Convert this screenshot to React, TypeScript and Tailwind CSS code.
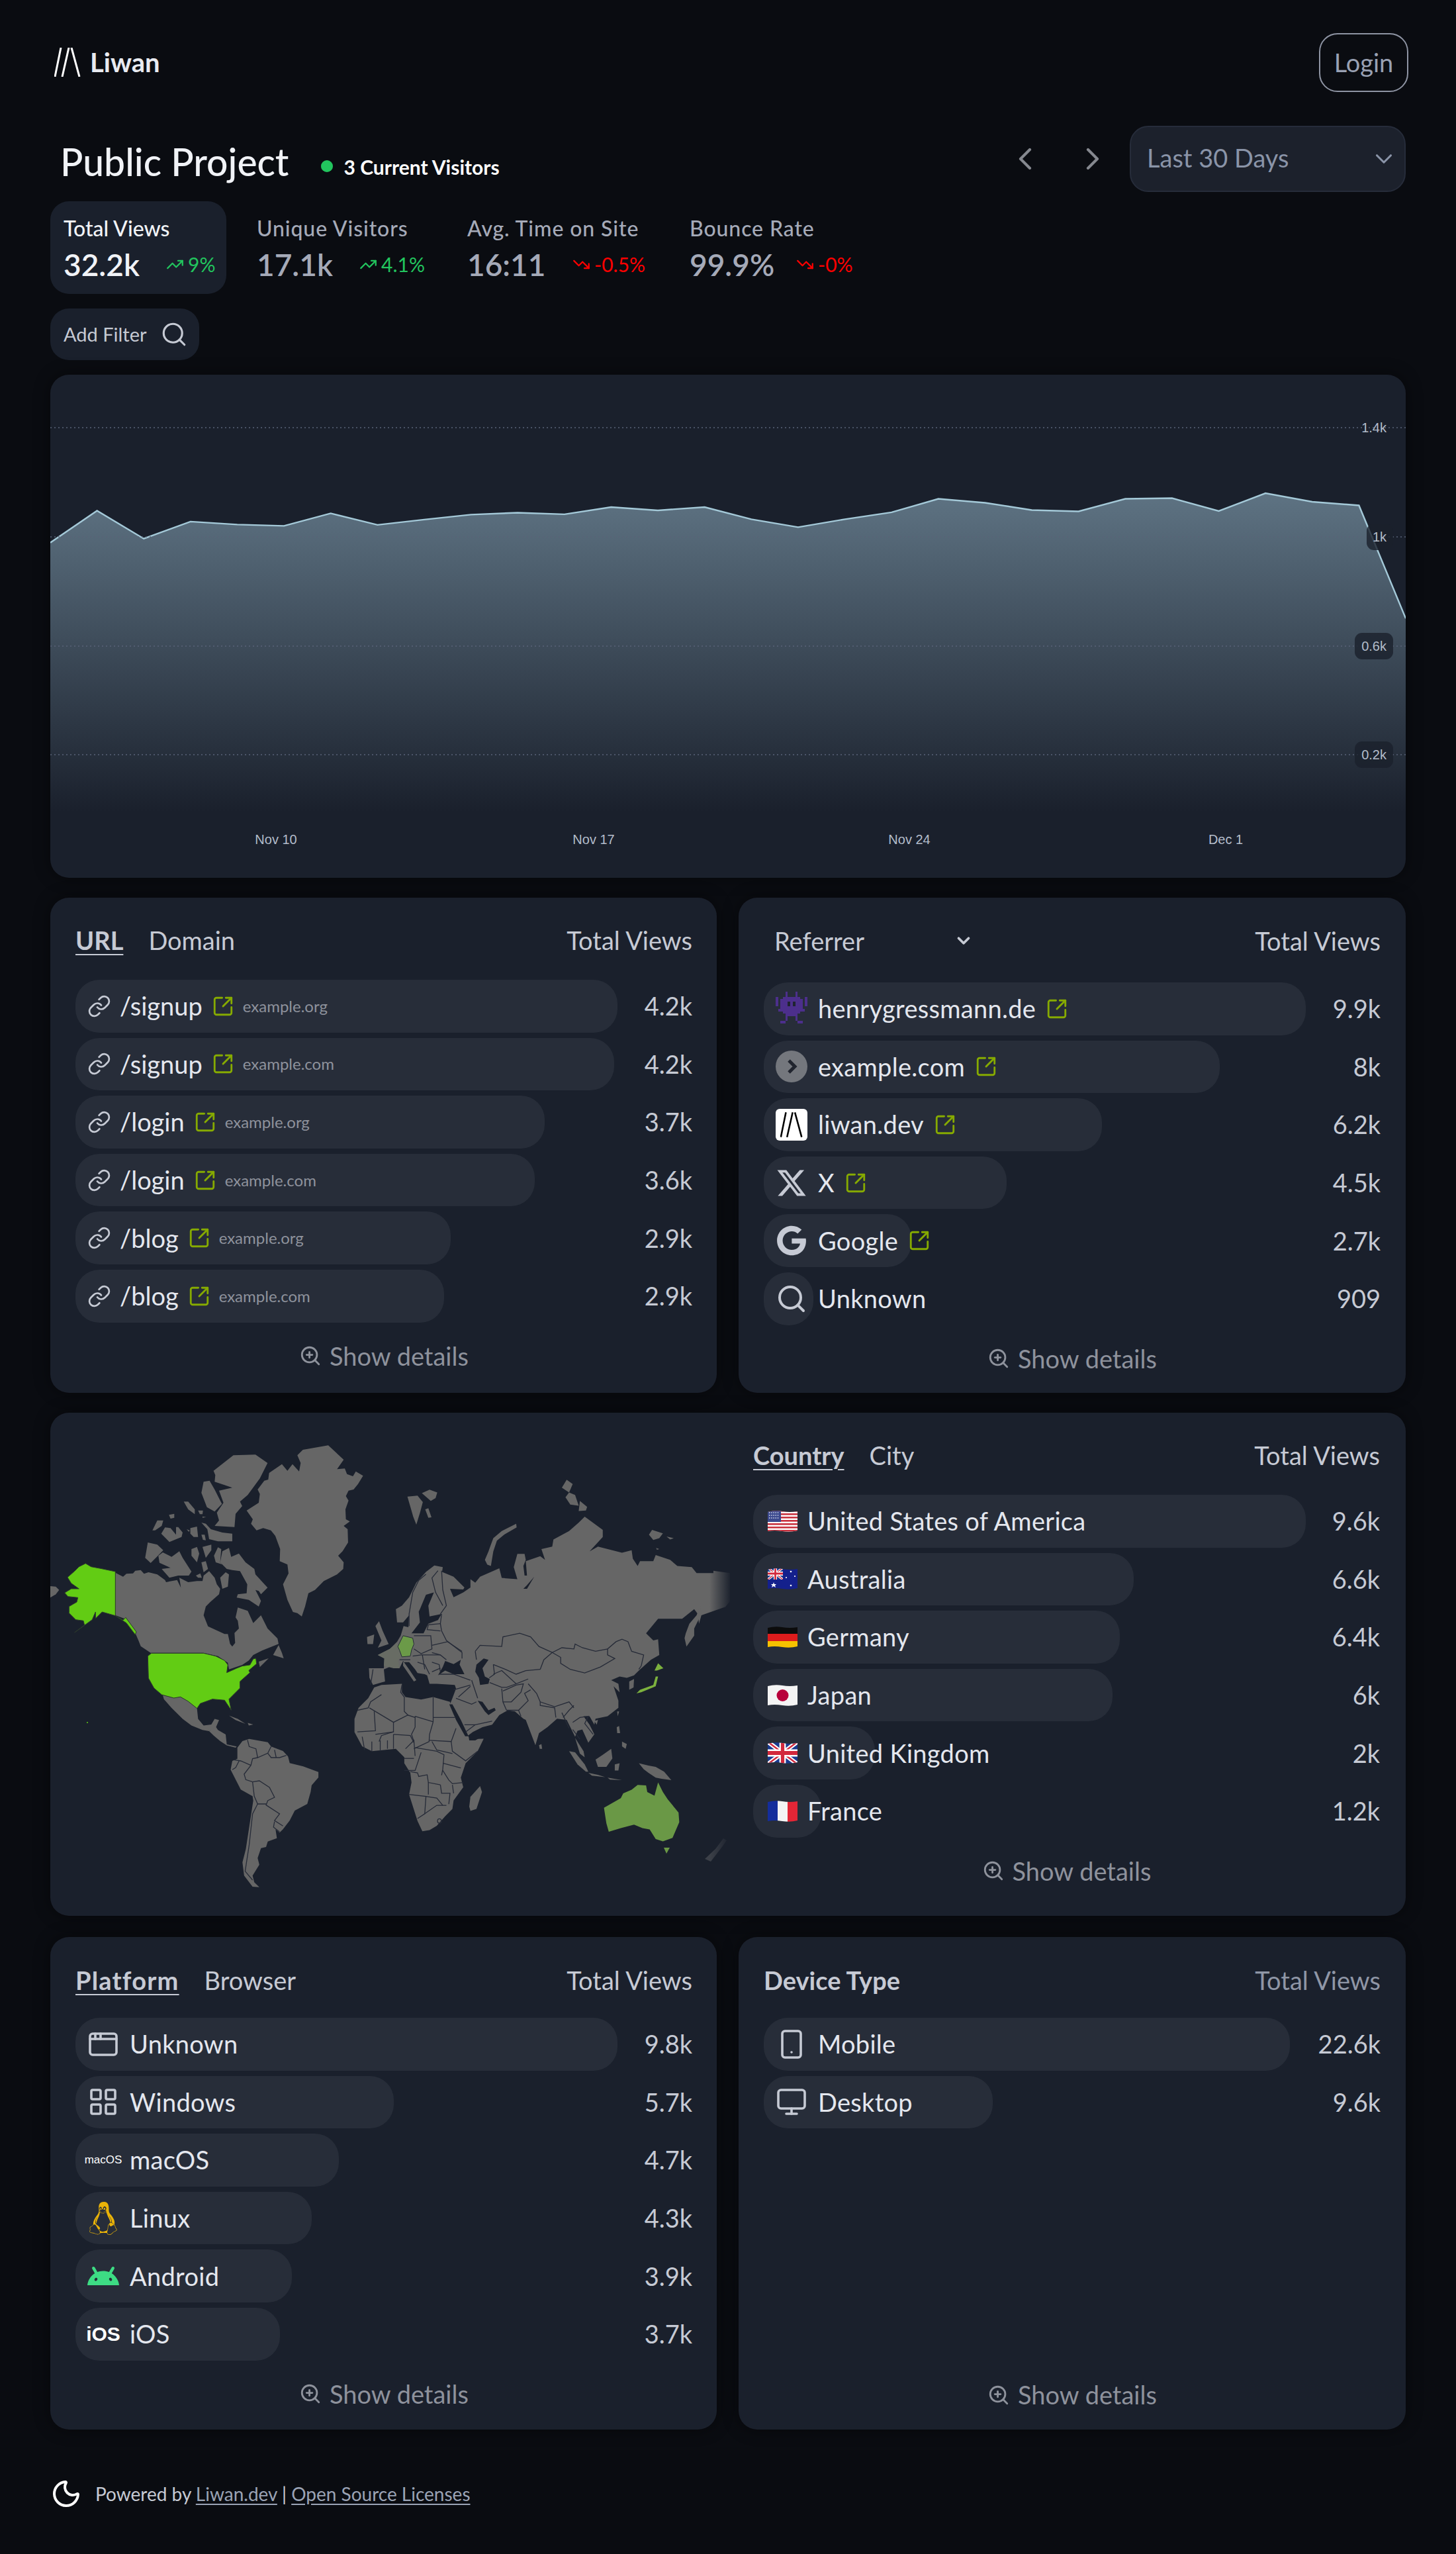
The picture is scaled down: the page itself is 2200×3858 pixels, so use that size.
import type { ReactNode } from 'react';
import {
  AppWindow,
  ChevronDown,
  ChevronLeft,
  ChevronRight,
  LayoutGrid,
  Link,
  Monitor,
  Moon,
  Search,
  Smartphone,
  SquareArrowOutUpRight,
  TrendingDown,
  TrendingUp,
  ZoomIn,
} from 'lucide-react';
import { FaGoogle, FaLinux, FaXTwitter } from 'react-icons/fa6';
import { SiAndroid } from 'react-icons/si';

type RowData = {
  label: string;
  value: string;
  right: number;
  icon: ReactNode;
  ext?: boolean;
  sub?: string;
};

function LiwanLogo({ className, color }: { className: string; color: string }) {
  return (
    <svg viewBox="0 0 40 44" className={className} fill="none" stroke={color} strokeWidth="3">
      <path d="M1 44 10 0M12 44 22 0M26 0 38 44" />
    </svg>
  );
}

function Invader() {
  return (
    <svg viewBox="0 0 13 14" className="h-[56px] w-[48px]" fill="#4c2f8c" shapeRendering="crispEdges">
      <path d="M0 2h1v4H0zM12 2h1v4h-1zM4 0h1v2H4zM8 0h1v2H8z" />
      <path d="M3 2h7v1h1v5h-1v1H9v3H8v-2H5v2H4V9H3V8H2V3h1z" />
      <path d="M2 12h2v1H2zM9 12h2v1H9zM1 7h1v1H1zM11 7h1v1h-1z" />
      <path d="M5 4h1v2H5zM7 4h1v2H7z" fill="#1f2430" />
    </svg>
  );
}

function ExampleIcon() {
  return (
    <svg viewBox="0 0 48 48" className="size-[48px]">
      <circle cx="24" cy="24" r="24" fill="#74777d" />
      <path d="M20 15l9 9-9 9" fill="none" stroke="#20242e" strokeWidth="5" />
    </svg>
  );
}

function FlagShape({ id, children }: { id: string; children: ReactNode }) {
  return (
    <svg viewBox="0 0 45 34" className="h-[34px] w-[45px]">
      <clipPath id={id}>
        <path d="M0 3Q11 0 22 2T45 2V31Q34 34 22 32T0 32Z" />
      </clipPath>
      <g clipPath={`url(#${id})`}>{children}</g>
    </svg>
  );
}

function UnionJack({ w, h }: { w: number; h: number }) {
  return (
    <svg x="0" y="0" width={w} height={h} viewBox="0 0 60 40" preserveAspectRatio="none">
      <rect width="60" height="40" fill="#1a3a8f" />
      <path d="M0 0 60 40M60 0 0 40" stroke="#fff" strokeWidth="8" />
      <path d="M0 0 60 40M60 0 0 40" stroke="#d2283c" strokeWidth="3" />
      <path d="M30 0V40M0 20H60" stroke="#fff" strokeWidth="13" />
      <path d="M30 0V40M0 20H60" stroke="#d2283c" strokeWidth="7" />
    </svg>
  );
}

function FlagUS() {
  const stripes = [0, 1, 2, 3, 4, 5, 6];
  return (
    <FlagShape id="flag-us">
      <rect width="45" height="34" fill="#fff" />
      {stripes.map((i) => (
        <rect key={i} y={i * 5} width="45" height="2.6" fill="#c8313e" />
      ))}
      <rect width="20" height="18" fill="#3c4a8e" />
      <path d="M2 4h16M2 8h16M2 12h16" stroke="#dfe3f2" strokeWidth="1.4" strokeDasharray="1.4 1.8" />
    </FlagShape>
  );
}

function FlagAU() {
  return (
    <FlagShape id="flag-au">
      <rect width="45" height="34" fill="#14208c" />
      <UnionJack w={23} h={18} />
      <path d="M9 22l1 3h3l-2 2 1 3-3-2-3 2 1-3-2-2h3z" fill="#fff" />
      <circle cx="35" cy="6" r="1.3" fill="#fff" />
      <circle cx="35" cy="27" r="1.3" fill="#fff" />
      <circle cx="28" cy="15" r="1.1" fill="#fff" />
      <circle cx="41" cy="13" r="1.1" fill="#fff" />
    </FlagShape>
  );
}

function FlagDE() {
  return (
    <FlagShape id="flag-de">
      <rect width="45" height="12" fill="#0c0c0c" />
      <rect y="12" width="45" height="11" fill="#dd1c1c" />
      <rect y="23" width="45" height="11" fill="#f6c200" />
    </FlagShape>
  );
}

function FlagJP() {
  return (
    <FlagShape id="flag-jp">
      <rect width="45" height="34" fill="#f4f4f4" />
      <circle cx="22.5" cy="17" r="9" fill="#b8003a" />
    </FlagShape>
  );
}

function FlagGB() {
  return (
    <FlagShape id="flag-gb">
      <UnionJack w={45} h={34} />
    </FlagShape>
  );
}

function FlagFR() {
  return (
    <FlagShape id="flag-fr">
      <rect width="15" height="34" fill="#142d9c" />
      <rect x="15" width="15" height="34" fill="#f4f4f4" />
      <rect x="30" width="15" height="34" fill="#e32636" />
    </FlagShape>
  );
}

// americas and greenland, traced at 3x
const WEST_LAND = [
  'M1120 85 1145 60 1260 40 1330 105 1300 148 1335 145 1345 170 1372 180 1385 158 1418 178 1395 215 1375 240 1352 245 1340 270 1352 290 1338 330 1340 375 1358 385 1330 405 1348 420 1350 480 1325 520 1305 540 1330 570 1328 600 1300 625 1240 655 1200 695 1170 710 1155 770 1140 815 1120 800 1100 795 1075 740 1055 670 1080 620 1075 580 1040 565 1042 510 1020 450 1000 425 965 415 935 425 910 395 918 375 890 335 945 300 950 260 940 240 970 200 988 195 992 165 1050 125 1075 155 1098 125 1128 158 1135 120Z',
  'M740 155 830 85 930 82 985 120 950 190 895 265 860 295 870 315 840 350 835 410 745 405 765 380 755 345 785 300 765 245 825 232 790 220 745 205 748 175Z',
  'M695 205 722 200 745 240 765 280 778 305 745 340 710 320 685 255Z',
  'M605 295 625 295 655 330 655 352 625 330Z',
  'M670 335 692 335 690 352 678 352Z',
  'M690 362 706 365 690 368Z',
  'M538 355 562 350 562 368 545 372Z',
  'M463 425 485 380 512 380 505 405 475 425Z',
  'M685 390 705 395 728 420 780 435 825 440 825 475 760 475 720 465 712 420Z',
  'M570 410 580 410 600 435 595 455 540 478 503 440 520 412 545 415 570 445Z',
  'M618 420 632 425 628 432Z',
  'M635 415 665 408 670 455 650 455 635 440Z',
  'M685 445 700 445 705 470 692 468Z',
  'M430 550 442 480 485 490 512 515 480 548 455 573Z',
  'M490 540 510 525 550 545 585 520 600 550 640 612 628 630 580 630 540 640 505 600 545 595 495 572Z',
  'M640 510 665 500 675 530 665 570 640 540Z',
  'M690 500 730 490 730 515 705 550Z',
  'M742 540 760 502 775 510 770 570 780 580 750 570Z',
  'M780 520 810 505 820 545 855 530 885 570 925 600 930 625 985 685 955 715 945 700 930 695 955 745 945 770 900 740 845 730 850 715 890 710 893 670 860 610 825 605 800 600 770 570Z',
  'M770 640 795 615 810 625 805 680 780 690Z',
  'M660 630 680 620 687 640 670 640Z',
  'M685 570 705 565 715 600 695 615Z',
  'M295 617 330 635 345 622 375 620 385 608 410 605 425 622 445 615 485 625 520 650 525 660 575 650 592 685 585 640 625 660 665 655 690 655 695 630 720 610 745 640 755 670 770 690 765 715 725 750 705 770 695 810 715 860 790 895 805 895 815 940 825 952 838 935 835 890 855 870 850 835 840 820 850 775 895 790 920 845 955 810 985 870 1030 915 1035 940 960 970 920 990 900 1015 870 1035 810 1055 805 1025 760 995 695 980 455 980 410 950 400 925 385 890 350 830 295 810Z',
  'M1010 990 1035 945 1050 980 1058 1005Z',
  'M945 1020 990 1005 950 1045Z',
  'M0 678 25 680 40 695 25 715 0 730Z',
  'M510 1172 560 1185 590 1180 625 1200 665 1232 670 1280 695 1310 730 1305 745 1280 765 1285 750 1320 720 1335 690 1330 640 1310 600 1280 550 1230 515 1190Z',
  'M720 1335 750 1315 760 1330 795 1350 800 1395 845 1405 840 1410 800 1400 770 1380 740 1355Z',
  'M810 1265 850 1280 885 1302 840 1285Z',
  'M895 1298 920 1305 900 1310Z',
];

const US_STATES = [
  'M442 995 458 982 695 982 750 995 790 1015 805 1035 800 1070 845 1050 870 1040 905 1035 920 1008 932 1005 935 1030 900 1060 905 1070 860 1110 860 1140 810 1190 820 1240 810 1225 790 1195 735 1190 680 1210 665 1232 625 1200 590 1180 560 1185 505 1170 470 1140 445 1095Z',
  'M295 612 228 598 185 590 160 575 130 590 110 610 78 638 95 665 130 690 95 690 65 708 80 725 125 730 120 750 85 770 85 800 115 830 150 835 155 855 110 888 190 830 205 795 205 825 235 795 295 812 330 832 342 820 390 885 385 898 345 845 295 812Z',
];

// south america, traced from the wide crop
const SOUTH_LAND =
  'M115 240 130 210 150 200 205 215 215 235 250 255 265 280 270 310 310 325 355 350 355 375 335 410 332 440 322 495 285 525 270 570 250 610 240 625 228 610 232 650 205 665 200 690 185 695 175 740 180 770 160 820 165 850 180 872 160 870 135 820 130 760 140 700 150 600 162 480 160 460 125 430 95 340 100 300 115 290Z';

const SOUTH_BORDERS = [
  'M145 205 150 235 170 245 175 285 205 265 215 235',
  'M205 265 215 285 240 285 260 275',
  'M225 250 230 285',
  'M175 285 160 290 155 320 135 360 140 385 160 395',
  'M105 295 125 300 155 320',
  'M120 300 110 330 100 340',
  'M160 395 180 390 210 420 225 465 205 480 200 500 240 540 225 570 250 595',
  'M160 395 165 460 175 495 200 495',
  'M175 495 160 540 150 680 138 800 160 840',
  'M225 575 222 600 240 622',
];

// old world and australia, traced at 2.75x
const EAST_LAND = [
  'M160 580 185 565 215 530 245 470 285 425 320 398 355 405 352 425 400 445 445 490 440 498 385 495 400 530 440 510 470 490 470 455 490 470 510 445 590 410 600 450 665 455 650 405 665 350 695 350 700 375 690 400 695 440 725 440 735 445 705 480 690 495 705 495 735 445 705 440 700 380 760 360 780 375 765 330 810 320 815 290 880 255 920 220 945 195 1020 250 1020 280 965 340 1000 320 1100 345 1140 335 1145 370 1165 400 1175 380 1230 380 1240 355 1300 375 1330 400 1390 405 1410 430 1480 430 1480 420 1550 430 1550 545 1530 570 1430 605 1420 640 1415 600 1400 580 1350 620 1250 620 1200 680 1230 710 1250 705 1255 770 1220 790 1170 835 1150 855 1120 865 1090 860 1055 875 1085 890 1090 925 1065 900 1085 960 1085 990 1040 1025 990 1035 985 1060 965 1025 940 1025 965 1060 985 1100 960 1135 935 1080 915 1085 905 1110 870 1040 830 1035 790 1070 755 1095 740 1145 700 1040 690 1035 655 1005 625 1000 590 1020 560 1060 520 1070 480 1090 460 1105 445 1100 420 1040 385 975 395 950 410 910 405 895 330 890 300 890 290 855 280 850 250 845 240 830 215 800 190 800 190 815 235 880 245 875 215 830 190 795 175 825 145 815 110 830 115 880 65 895 50 865 48 825 110 825 112 785 85 770 135 745 165 715 180 690 192 650 212 655 215 605 190 635 165 635Z',
  'M-12 1036 5 990 45 950 70 905 100 895 185 890 185 925 200 945 265 955 315 945 385 965 400 1015 455 1100 470 1120 525 1118 500 1170 450 1220 430 1280 440 1320 400 1375 395 1410 365 1440 330 1480 300 1498 270 1503 250 1460 215 1350 225 1300 220 1260 195 1220 195 1195 160 1160 60 1170 20 1150 -12 1091Z',
  'M465 1400 470 1360 510 1315 518 1340 495 1410 470 1418Z',
  'M208 112 250 108 272 135 260 180 245 228 232 195Z',
  'M268 98 300 83 332 95 325 118 305 130Z',
  'M282 165 295 160 308 198 295 200Z',
  'M850 75 870 42 895 60 880 95Z',
  'M865 115 880 95 905 105 920 150 885 145Z',
  'M925 130 955 155 950 170 920 172Z',
  'M530 375 545 340 552 320 565 285 600 255 660 225 662 240 610 270 580 295 565 340 555 400 540 395Z',
  'M1212 270 1225 250 1270 265 1255 285 1230 292Z',
  'M1285 278 1315 285 1300 290Z',
  'M1242 325 1255 330 1245 333Z',
  'M1365 680 1380 640 1410 605 1425 565 1428 590 1420 620 1400 660 1400 690 1368 735 1360 700Z',
  'M75 650 90 630 105 670 130 725 85 740 100 710Z',
  'M40 695 70 685 65 725 42 725Z',
  'M1130 880 1150 870 1148 905 1130 915Z',
  'M755 1145 765 1140 768 1160 758 1160Z',
  'M985 1045 1000 1040 995 1060Z',
  'M1080 1005 1088 1005 1082 1025Z',
  'M1078 1070 1088 1065 1092 1095 1080 1095Z',
  'M1100 1130 1120 1140 1115 1160 1100 1150Z',
  'M880 1170 905 1175 945 1225 960 1255 950 1255 915 1225Z',
  'M960 1260 1000 1268 1030 1278 975 1272Z',
  'M990 1205 1020 1185 1055 1160 1060 1200 1035 1235 1000 1235Z',
  'M1070 1225 1090 1220 1085 1250 1070 1250Z',
  'M905 1115 940 1170 945 1195 925 1180Z',
  'M1170 1220 1210 1230 1240 1235 1275 1255 1305 1290 1265 1285 1240 1280 1210 1260 1190 1245Z',
  'M1040 1280 1100 1290 1050 1288Z',
];

const EAST_SEAS = [
  'M260 580 285 520 318 510 295 565 300 610 350 600 335 625 295 640 275 680 225 680 260 635 255 590Z',
  'M335 855 355 820 365 795 400 808 430 790 425 810 445 850 400 850 365 835Z',
  'M495 810 525 785 545 790 520 825 530 860 550 870 545 890 510 895 505 865 490 840Z',
  'M382 975 395 975 430 1040 462 1108 448 1108 410 1040Z',
  'M500 960 520 965 545 1000 570 990 575 1000 545 1020 530 1005Z',
  'M462 1105 525 1105 490 1125 465 1125Z',
];

const EAST_BORDERS = [
  'M100 935 55 965 45 990 0 1000',
  'M50 990 150 1050 210 1020 240 1030',
  'M185 895 180 925 195 945 195 1005 210 1020',
  'M315 945 315 1048',
  'M240 1025 315 1048',
  'M315 1030 405 1030',
  'M70 1005 75 1085 0 1090',
  'M150 1050 150 1090 75 1100',
  'M240 1025 240 1070 225 1100 235 1130',
  'M150 1090 130 1095 100 1105 90 1130',
  'M315 1048 300 1100 298 1130 235 1160',
  'M410 1075 390 1130 300 1125',
  'M390 1130 395 1170 450 1210 500 1170',
  'M310 1130 330 1165 395 1180',
  'M20 1110 30 1165',
  'M60 1130 60 1170',
  'M95 1125 95 1170',
  'M125 1125 125 1160',
  'M150 1100 150 1160',
  'M150 1100 220 1105 235 1135',
  'M200 1160 235 1125 240 1190',
  'M240 1155 330 1170 360 1185 355 1245 350 1270',
  'M265 1175 240 1250 195 1250',
  'M195 1200 235 1200',
  'M220 1255 250 1260 255 1275 290 1268 295 1300 345 1310',
  'M295 1300 295 1350',
  'M355 1220 430 1240',
  'M355 1250 380 1290 395 1305 440 1300',
  'M215 1350 285 1358 280 1430 250 1450',
  'M285 1358 330 1365 355 1395',
  'M280 1430 330 1395 370 1395',
  'M345 1310 350 1345 385 1345 380 1390',
  'M395 1310 400 1345',
  'M333 1460a8 9 0 1 0 16 0a8 9 0 1 0 -16 0',
  'M350 600 345 640 350 670 370 710 435 760 435 785',
  'M490 755 510 730 600 735 605 695 675 680 720 695 755 735 810 760 775 790 760 830',
  'M490 755 495 790',
  'M810 760 850 740 900 745 905 725 935 740 990 755 1040 745 1075 715 1100 705 1125 715 1140 755 1190 770 1180 815 1170 830',
  'M810 760 845 780 845 805 885 830 945 845 1010 820 1070 785 1040 770 1040 745',
  'M565 810 615 830 660 850 700 835 760 830',
  'M565 810 570 850 548 865',
  'M565 850 600 835 660 890',
  'M550 885 600 905 620 905 660 890 710 870',
  'M475 875 500 950',
  'M600 910 605 965 620 1000',
  'M605 920 660 895 690 890 680 925 640 965 605 965',
  'M620 1000 670 1000 710 960 695 930 720 915',
  'M710 890 745 930 760 965 820 985 880 965 900 990',
  'M670 1000 680 1025',
  'M760 965 760 980 820 990 825 1030',
  'M850 1010 880 1075',
  'M900 980 880 1000 855 1030',
  'M895 1050 925 1030 960 1025 945 1055 980 1100',
  'M895 1080 925 1120',
  'M410 950 475 975 495 965',
  'M420 945 470 900',
  'M445 1060 490 1060 560 1045',
  'M490 1060 450 1090',
  'M340 850 400 850 470 875',
  'M400 915 470 895',
  'M285 435 255 460 230 510 215 600 215 650',
  'M335 420 310 450 325 510 355 565',
  'M350 420 355 500 370 565 345 600',
  'M235 690 305 690 310 745 265 765 235 745',
  'M345 640 295 645 290 665 345 670',
  'M310 730 375 715 435 755',
  'M310 760 345 770 370 790',
  'M230 775 265 770 300 770 345 770',
  'M250 800 280 810 300 850',
  'M270 770 280 830',
  'M310 800 340 810 345 840',
  'M310 840 345 825',
  'M65 830 55 895',
  'M175 790 220 790',
];

function MapPaths({ paths, className }: { paths: string[]; className?: string }) {
  return (
    <g className={className}>
      {paths.map((d) => (
        <path key={d} d={d} vectorEffect="non-scaling-stroke" />
      ))}
    </g>
  );
}

function WorldMap() {
  const border = { fill: 'none', stroke: '#262b38', strokeWidth: 1.3 };
  return (
    <svg viewBox="0 0 1027 760" className="h-[760px] w-[1027px] shrink-0">
      <defs>
        <linearGradient id="map-fade" x1="0" x2="1" y1="0" y2="0">
          <stop offset="0" stopColor="#1a202c" stopOpacity="0" />
          <stop offset="1" stopColor="#1a202c" stopOpacity="0.95" />
        </linearGradient>
      </defs>

      <g transform="translate(0 36) scale(0.3333)" fill="#666666">
        <MapPaths paths={WEST_LAND} />
        <g fill="#62cc14" stroke="#2c3a2c" strokeWidth="1">
          <MapPaths paths={US_STATES} />
        </g>
        <circle cx="168" cy="1296" r="3" fill="#62cc14" />
      </g>

      <g transform="translate(224 426) scale(0.5102 0.3333)" fill="#666666">
        <path d={SOUTH_LAND} />
        <g {...border}>
          <MapPaths paths={SOUTH_BORDERS} />
        </g>
      </g>

      <g transform="translate(464 86) scale(0.3635)" fill="#666666">
        <MapPaths paths={EAST_LAND} />
        <g fill="#1a202c">
          <MapPaths paths={EAST_SEAS} />
        </g>
        <path d="M85 770 135 745 165 720 185 778 170 790 175 825 150 825 110 815 112 785Z" fill="#686c64" />
        <g {...border}>
          <MapPaths paths={EAST_BORDERS} />
        </g>
        <path d="M168 735 190 690 230 700 235 725 225 750 220 775 185 778 175 750Z" fill="#6b9a48" stroke="#262b38" vectorEffect="non-scaling-stroke" />
        <path d="M1160 930 1175 915 1230 895 1240 860 1250 860 1240 900 1205 915 1180 925ZM1235 835 1250 805 1272 825 1245 835Z" fill="#7cb13e" />
        <path
          d="M1025 1405 1095 1365 1105 1345 1140 1330 1165 1310 1200 1312 1205 1340 1235 1355 1250 1300 1270 1340 1290 1370 1335 1425 1338 1465 1310 1530 1270 1545 1240 1535 1215 1495 1185 1490 1150 1475 1095 1490 1045 1505 1035 1470Z"
          fill="#6a9846"
        />
      </g>
      <path d="M927 657 936 657 931 666Z" fill="#6a9846" />
      <path d="M989 674 1005 659 1017 643 1022 646 1015 656 998 678Z" fill="#3c4048" />
      <rect x="996" y="0" width="31" height="760" fill="url(#map-fade)" />
    </svg>
  );
}

const CHART_POINTS = [
  522, 425, 510, 458, 467, 471, 433, 468, 452, 437, 431, 436, 414, 424, 414, 451, 475, 451, 430, 389, 401, 423, 427,
  389, 387, 426, 372, 398, 409, 752,
];

function Chart() {
  const pts = CHART_POINTS.map((z, i) => `${(i * 2048) / 29} ${z / 2.01 - 6}`);
  const grid = [
    { y: 80, label: '1.4k', pill: false },
    { y: 245, label: '1k', pill: true },
    { y: 410, label: '0.6k', pill: true },
    { y: 574, label: '0.2k', pill: true },
  ];
  const ticks = [
    { x: 341, label: 'Nov 10' },
    { x: 821, label: 'Nov 17' },
    { x: 1298, label: 'Nov 24' },
    { x: 1776, label: 'Dec 1' },
  ];
  return (
    <svg viewBox="0 0 2048 760" className="block h-full w-full">
      <defs>
        <linearGradient id="area" x1="0" x2="0" y1="0" y2="1">
          <stop offset="0" stopColor="#5e7383" />
          <stop offset="1" stopColor="#1a202c" />
        </linearGradient>
      </defs>
      <path d={`M${pts.join(' ')} V660 H0Z`} fill="url(#area)" />
      <path d={`M${pts.join(' ')}`} fill="none" stroke="#a4c9d8" strokeWidth="2.4" />
      {grid.map((g) => (
        <g key={g.label}>
          <path d={`M0 ${g.y}H2048`} stroke="#5a6378" strokeWidth="1.4" strokeDasharray="2 4" />
          {g.pill && (
            <rect x={g.label === '1k' ? 1989 : 1971} y={g.y - 20} width={g.label === '1k' ? 40 : 58} height="40" rx="11" fill="#1a202c" fillOpacity="0.8" />
          )}
          <text x="2019" y={g.y + 7} textAnchor="end" fontSize="20" fill="#b4bdcb" fontFamily="Liberation Sans">
            {g.label}
          </text>
        </g>
      ))}
      {ticks.map((t) => (
        <text key={t.label} x={t.x} y="709" textAnchor="middle" fontSize="20" fill="#b4bdcb" fontFamily="Liberation Sans">
          {t.label}
        </text>
      ))}
    </svg>
  );
}

function Bars({ rows, barLeft, textLeft, textGap }: { rows: RowData[]; barLeft: number; textLeft: string; textGap: string }) {
  return (
    <div className="flex flex-col gap-[8px]">
      {rows.map((row) => (
        <div key={row.label + row.sub} className="flex h-[79.6px] items-center justify-between">
          <div className="relative flex h-full items-center">
            <div
              className="absolute inset-y-0 left-0 rounded-[36px] bg-[#272d39]"
              style={{ width: row.right - barLeft }}
            />
            <div className={`relative flex items-center ${textLeft}`}>
              <span className="flex w-[48px] shrink-0 items-center justify-center text-[#c6cad4]">{row.icon}</span>
              <span className={`${textGap} text-[38px] whitespace-nowrap text-[#e4e7ee] ${row.sub ? '' : 'tracking-[0.3px]'}`}>{row.label}</span>
              {row.ext && <SquareArrowOutUpRight className={`${row.sub ? 'ml-[14px]' : 'ml-[15px]'} size-[34px] text-[#86aa00]`} strokeWidth={2} />}
              {row.sub && <span className="ml-[13px] text-[24px] whitespace-nowrap text-[#8e929c]">{row.sub}</span>}
            </div>
          </div>
          <span className="text-[38px] text-[#c6cad4]">{row.value}</span>
        </div>
      ))}
    </div>
  );
}

function ShowDetails({ className }: { className: string }) {
  return (
    <div className={`flex items-center justify-center gap-[12px] text-[38px] text-[#8e929c] ${className}`}>
      <ZoomIn className="size-[34px]" strokeWidth={2} />
      Show details
    </div>
  );
}

function Tab({ children, active, className = '' }: { children: ReactNode; active?: boolean; className?: string }) {
  return active ? (
    <span className={`font-bold text-[#c6cad4] underline decoration-[2px] underline-offset-[6px] ${className}`}>{children}</span>
  ) : (
    <span className={`text-[#c6cad4] ${className}`}>{children}</span>
  );
}

function Card({ className, children }: { className: string; children: ReactNode }) {
  return <section className={`rounded-[28px] bg-[#1a202c] shadow-[0_0_24px_rgba(0,0,0,0.45)] ${className}`}>{children}</section>;
}

const linkIcon = <Link className="size-[36px]" strokeWidth={1.8} />;

const urlRows: RowData[] = [
  { label: '/signup', sub: 'example.org', value: '4.2k', right: 933, ext: true, icon: linkIcon },
  { label: '/signup', sub: 'example.com', value: '4.2k', right: 928, ext: true, icon: linkIcon },
  { label: '/login', sub: 'example.org', value: '3.7k', right: 823, ext: true, icon: linkIcon },
  { label: '/login', sub: 'example.com', value: '3.6k', right: 808, ext: true, icon: linkIcon },
  { label: '/blog', sub: 'example.org', value: '2.9k', right: 681, ext: true, icon: linkIcon },
  { label: '/blog', sub: 'example.com', value: '2.9k', right: 671, ext: true, icon: linkIcon },
];

const referrerRows: RowData[] = [
  { label: 'henrygressmann.de', value: '9.9k', right: 1973, ext: true, icon: <Invader /> },
  { label: 'example.com', value: '8k', right: 1843, ext: true, icon: <ExampleIcon /> },
  {
    label: 'liwan.dev',
    value: '6.2k',
    right: 1665,
    ext: true,
    icon: (
      <span className="flex size-[48px] items-center justify-center rounded-[6px] bg-white">
        <LiwanLogo className="h-[38px] w-[34px]" color="#000" />
      </span>
    ),
  },
  { label: 'X', value: '4.5k', right: 1521, ext: true, icon: <FaXTwitter className="size-[48px]" /> },
  { label: 'Google', value: '2.7k', right: 1377, ext: true, icon: <FaGoogle className="size-[46px]" /> },
  { label: 'Unknown', value: '909', right: 1229, icon: <Search className="size-[50px]" strokeWidth={2} /> },
];

const countryRows: RowData[] = [
  { label: 'United States of America', value: '9.6k', right: 1973, icon: <FlagUS /> },
  { label: 'Australia', value: '6.6k', right: 1713, icon: <FlagAU /> },
  { label: 'Germany', value: '6.4k', right: 1692, icon: <FlagDE /> },
  { label: 'Japan', value: '6k', right: 1681, icon: <FlagJP /> },
  { label: 'United Kingdom', value: '2k', right: 1322, icon: <FlagGB /> },
  { label: 'France', value: '1.2k', right: 1241, icon: <FlagFR /> },
];

const platformRows: RowData[] = [
  { label: 'Unknown', value: '9.8k', right: 933, icon: <AppWindow className="size-[54px]" strokeWidth={1.8} /> },
  { label: 'Windows', value: '5.7k', right: 595, icon: <LayoutGrid className="size-[54px]" strokeWidth={1.8} /> },
  { label: 'macOS', value: '4.7k', right: 512, icon: <span className="font-['Liberation_Sans'] text-[17px] text-white">macOS</span> },
  { label: 'Linux', value: '4.3k', right: 471, icon: <FaLinux className="size-[50px] text-[#eab308]" /> },
  { label: 'Android', value: '3.9k', right: 441, icon: <SiAndroid className="size-[52px] text-[#3ddc84]" /> },
  { label: 'iOS', value: '3.7k', right: 423, icon: <span className="font-['Liberation_Sans'] text-[30px] font-bold text-white">iOS</span> },
];

const deviceRows: RowData[] = [
  { label: 'Mobile', value: '22.6k', right: 1949, icon: <Smartphone className="size-[54px]" strokeWidth={1.8} /> },
  { label: 'Desktop', value: '9.6k', right: 1500, icon: <Monitor className="size-[54px]" strokeWidth={1.8} /> },
];

const metrics = [
  { label: 'Total Views', value: '32.2k', delta: '9%', up: true, width: 'w-[292px]', valueWidth: 'w-[155px]', active: true },
  { label: 'Unique Visitors', value: '17.1k', delta: '4.1%', up: true, width: 'w-[318px]', valueWidth: 'w-[155px]' },
  { label: 'Avg. Time on Site', value: '16:11', delta: '-0.5%', up: false, width: 'w-[336px]', valueWidth: 'w-[159px]' },
  { label: 'Bounce Rate', value: '99.9%', delta: '-0%', up: false, width: 'w-[300px]', valueWidth: 'w-[161px]' },
];

export default function App() {
  return (
    <div className="min-h-[3858px] bg-[#0a0c11] px-[76px] font-['Lato','Noto_Sans',sans-serif] text-[#c6cad4]">
      <header className="flex h-[139px] items-end justify-between">
        <div className="mb-[15px] flex items-center gap-[14px] pl-[6px]">
          <LiwanLogo className="h-[44px] w-[40px]" color="#fff" />
          <span className="text-[40px] font-bold text-[#e8eaf0]">Liwan</span>
        </div>
        <button className="-mr-[4px] h-[89px] w-[135px] rounded-[28px] border-2 border-[#8e94a3] text-[38px] text-[#99a1b3]">Login</button>
      </header>

      <div className="mt-[51px] flex h-[100px] items-center justify-between">
        <div className="mt-[10px] flex items-center pl-[15px]">
          <h1 className="text-[57px] font-medium text-[#f1f3f7]">Public Project</h1>
          <span className="mt-[12px] ml-[48px] size-[18px] rounded-full bg-[#22c55e]" />
          <span className="mt-[14px] ml-[17px] text-[30px] font-bold text-white">3 Current Visitors</span>
        </div>
        <div className="flex items-center">
          <ChevronLeft className="size-[56px] text-[#85888f]" strokeWidth={1.8} />
          <ChevronRight className="ml-[46px] size-[56px] text-[#85888f]" strokeWidth={1.8} />
          <div className="ml-[28px] flex h-[100px] w-[417px] items-center justify-between rounded-[28px] border-2 border-[#262c3a] bg-[#1c212c] pr-[10px] pb-[4px] pl-[24px] text-[38px] text-[#8a94a8]">
            Last 30 Days
            <ChevronDown className="mt-[4px] size-[42px]" strokeWidth={1.8} />
          </div>
        </div>
      </div>

      <div className="mt-[14px] flex h-[140px]">
        {metrics.map((m) => (
          <div key={m.label} className={m.width}>
            <div className={`flex h-[140px] flex-col rounded-[28px] pt-[17px] pl-[20px] ${m.active ? 'w-[266px] bg-[#1a202c] text-[#f1f3f7]' : 'w-fit pr-[20px] text-[#a5aab8]'}`}>
              <div className={`text-[32px] font-medium whitespace-nowrap ${m.active ? '' : 'tracking-[0.9px]'}`}>{m.label}</div>
              <div className="-mt-[4px] flex items-center">
                <span className={`${m.valueWidth} text-[46px] font-semibold`}>{m.value}</span>
                <span className={`flex items-center gap-[6px] text-[30px] ${m.up ? 'text-[#22c55e]' : 'text-[#ff0000]'}`}>
                  {m.up ? <TrendingUp className="size-[27px]" /> : <TrendingDown className="size-[27px]" />}
                  {m.delta}
                </span>
              </div>
            </div>
          </div>
        ))}
      </div>

      <div className="mt-[22px] flex h-[78px] w-[225px] items-center justify-between rounded-[28px] bg-[#1a202c] pr-[17px] pl-[20px] text-[29px] text-[#c6cad4]">
        Add Filter
        <Search className="size-[42px]" strokeWidth={1.8} />
      </div>

      <Card className="mt-[22px] h-[760px] overflow-hidden">
        <Chart />
      </Card>

      <div className="mt-[30px] grid grid-cols-[1007px_1008px] justify-between">
        <Card className="flex h-[748px] flex-col pr-[37px] pl-[38px]">
          <div className="flex h-[124px] items-center justify-between pt-[4px] text-[38px]">
            <div className="flex gap-[38px]">
              <Tab active>URL</Tab>
              <Tab>Domain</Tab>
            </div>
            <span>Total Views</span>
          </div>
          <Bars rows={urlRows} barLeft={114} textLeft="pl-[12px]" textGap="ml-[7px]" />
          <ShowDetails className="mt-[22px]" />
        </Card>
        <Card className="flex h-[748px] flex-col px-[38px]">
          <div className="flex h-[128px] items-center justify-between pt-[2px] text-[38px]">
            <div className="flex items-center pl-[16px]">
              <span className="w-[271px]">Referrer</span>
              <ChevronDown className="size-[30px]" strokeWidth={3} />
            </div>
            <span>Total Views</span>
          </div>
          <Bars rows={referrerRows} barLeft={1154} textLeft="pl-[18px]" textGap="ml-[16px]" />
          <ShowDetails className="mt-[22px]" />
        </Card>
      </div>

      <Card className="mt-[30px] flex h-[760px]">
        <WorldMap />
        <div className="flex min-w-0 flex-1 flex-col pr-[39px] pl-[35px]">
          <div className="flex h-[124px] items-center justify-between pt-[4px] text-[38px]">
            <div className="flex gap-[38px]">
              <Tab active>Country</Tab>
              <Tab>City</Tab>
            </div>
            <span>Total Views</span>
          </div>
          <Bars rows={countryRows} barLeft={1138} textLeft="pl-[20px]" textGap="ml-[14px]" />
          <ShowDetails className="mt-[22px]" />
        </div>
      </Card>

      <div className="mt-[32px] grid grid-cols-[1007px_1008px] justify-between">
        <Card className="flex h-[744px] flex-col pr-[37px] pl-[38px]">
          <div className="flex h-[122px] items-center justify-between pt-[8px] text-[38px]">
            <div className="flex gap-[38px]">
              <Tab active className="tracking-[1.2px]">Platform</Tab>
              <Tab>Browser</Tab>
            </div>
            <span>Total Views</span>
          </div>
          <Bars rows={platformRows} barLeft={114} textLeft="pl-[18px]" textGap="ml-[16px]" />
          <ShowDetails className="mt-[22px]" />
        </Card>
        <Card className="flex h-[744px] flex-col px-[38px]">
          <div className="flex h-[122px] items-center justify-between pt-[8px] text-[38px]">
            <span className="font-bold">Device Type</span>
            <span className="text-[#8f96a6]">Total Views</span>
          </div>
          <Bars rows={deviceRows} barLeft={1154} textLeft="pl-[18px]" textGap="ml-[16px]" />
          <ShowDetails className="mt-auto mb-[24px]" />
        </Card>
      </div>

      <footer className="mt-[73px] flex items-center gap-[20px] text-[28px] text-[#c6cad4]">
        <Moon className="size-[48px] text-white" strokeWidth={2} />
        <span>
          Powered by <span className="text-[#9aa3b5] underline underline-offset-4">Liwan.dev</span> |{' '}
          <span className="text-[#9aa3b5] underline underline-offset-4">Open Source Licenses</span>
        </span>
      </footer>
    </div>
  );
}
